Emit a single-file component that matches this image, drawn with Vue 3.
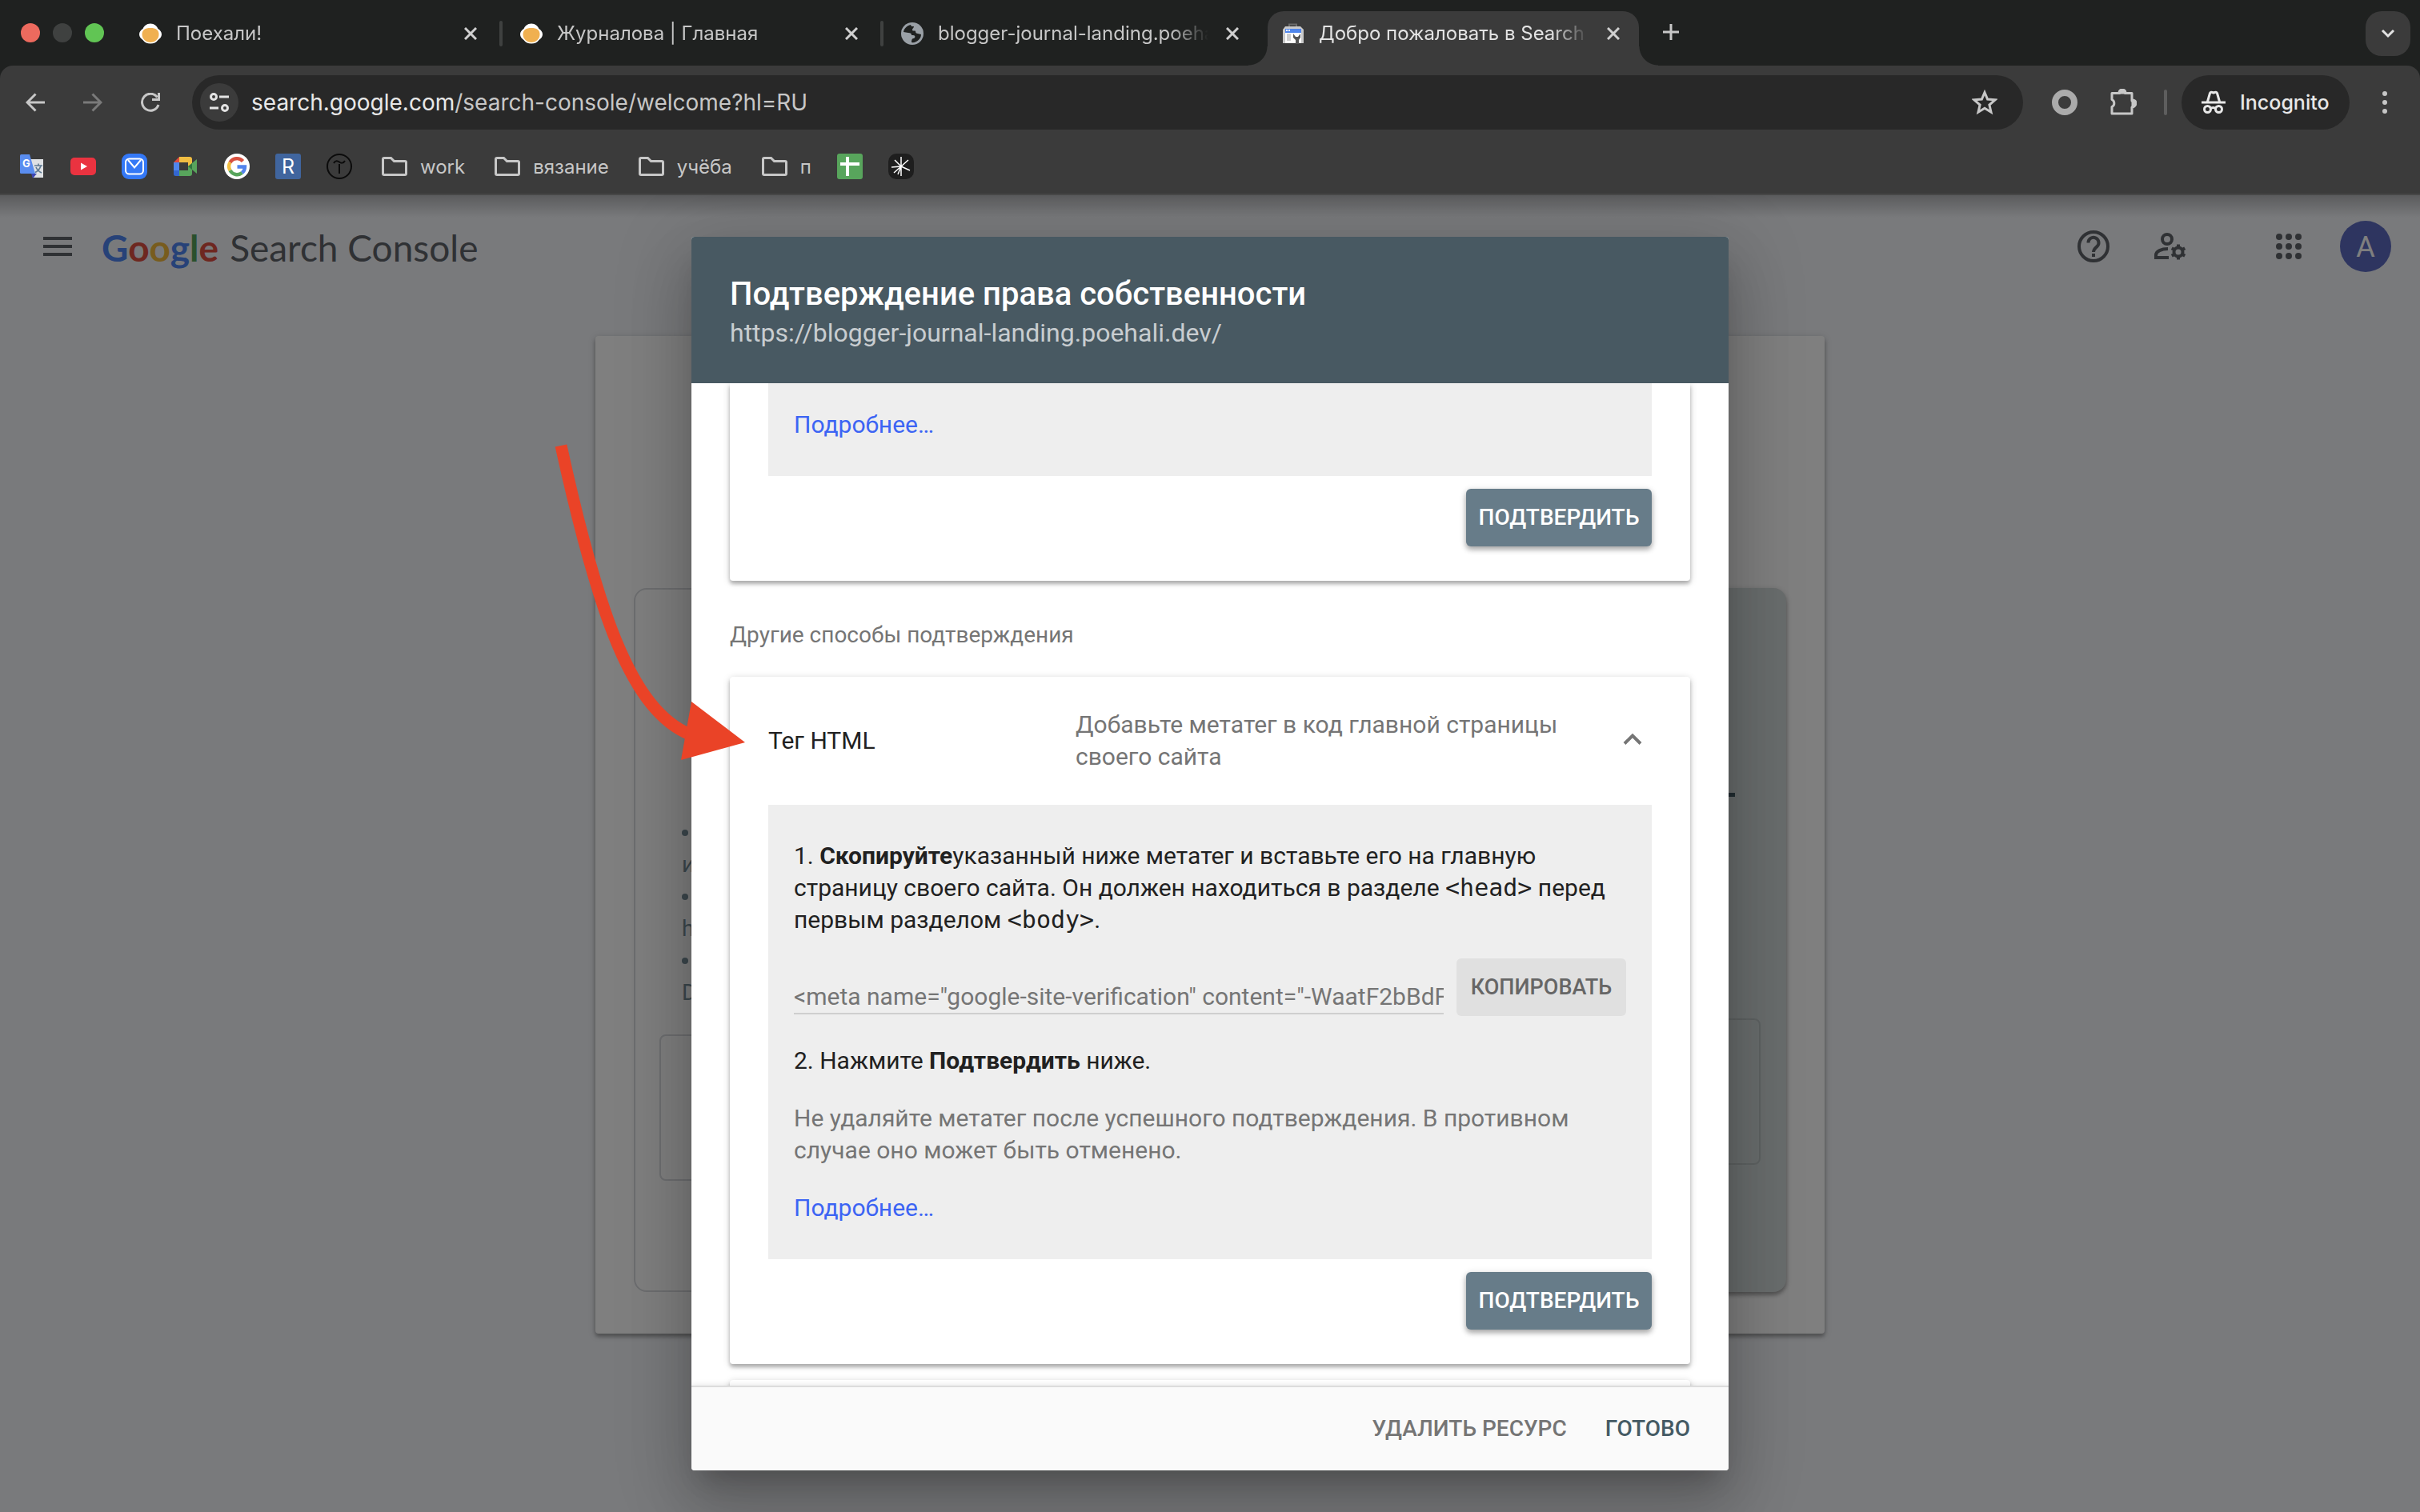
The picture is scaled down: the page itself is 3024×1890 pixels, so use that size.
<script setup>
import { ref } from 'vue'

const tabs = [
  { title: 'Поехали!', icon: 'egg', active: false },
  { title: 'Журналова | Главная', icon: 'egg', active: false },
  { title: 'blogger-journal-landing.poehali.dev', icon: 'globe', active: false },
  { title: 'Добро пожаловать в Search Console', icon: 'console', active: true },
]

const sites = ['translate', 'youtube', 'mail', 'meet', 'google', 'letter', 'tilda']
const folders = ['work', 'вязание', 'учёба', 'п']

const metaTag = ref('<meta name="google-site-verification" content="-WaatF2bBdFq" />')
const learnMore = 'Подробнее…'
</script>

<template>
  <div class="browser">
    <header class="chrome">
      <div class="tabstrip">
        <div class="lights">
          <span class="light light--close"></span>
          <span class="light light--min"></span>
          <span class="light light--max"></span>
        </div>
        <div class="tabs">
          <div v-for="tab in tabs" :key="tab.title" class="tab" :class="{ 'tab--active': tab.active }">
            <svg v-if="tab.icon === 'egg'" class="tab__icon" viewBox="0 0 28 28">
              <path d="M14 1.500c5 0 8 3 9.500 6.500C26 9.500 28 12 28 15s-2 5-4.500 7C21.500 25 18 26.500 14 26.500S6.500 25 4.500 22C2 20 0 18 0 15s2-5.500 4.500-7C6 4.500 9 1.500 14 1.500z" fill="#fff" />
              <path d="M14 7c7 0 10.500 2.500 10.500 8S20 25 14 25 3.500 20.500 3.500 15 7 7 14 7z" fill="#f0b050" />
            </svg>
            <svg v-else-if="tab.icon === 'globe'" class="tab__icon" viewBox="0 0 28 28">
              <circle cx="14" cy="14" r="14" fill="#9aa0a6" />
              <path d="M12 3c-5 1-8.500 5-9 9l6 1c3 0 4 1 4 3h2c3 0 3 3 1 4-2 0-3 1-3 5 6 1 12-4 12-10l-4-1c-2 0-3-1-3-3 0-1-3 0-4-1 0-3 2-3 2-5-2 0-4 0-4-2z" fill="#1f2120" />
              <path d="M3 13l6 1c3 0 4 1 4 3v3c-2 0-3 0-3 4C5.500 22.500 2.500 18 3 13z" fill="#9aa0a6" />
            </svg>
            <svg v-else class="tab__icon" viewBox="0 0 28 28">
              <path d="M9 6V2.500h9V6" fill="none" stroke="#6b6b6b" stroke-width="2" />
              <path d="M4 5h19l4 4v17H1V9z" fill="#c9c9c9" />
              <rect x="4" y="8" width="20" height="5" fill="#4f86ec" />
              <path d="M5 10h2M8 10h2" stroke="#fff" stroke-width="2" />
              <rect x="4" y="13" width="20" height="13" fill="#fff" />
              <rect x="6" y="14" width="5" height="9" fill="#cfcfcf" />
              <path d="M14 14v5l3 3v5h4v-5l2-3v-5l-3 4h-3z" fill="#555" />
            </svg>
            <span class="tab__title">{{ tab.title }}</span>
            <button class="tab__close" type="button" aria-label="Закрыть">
              <svg viewBox="0 0 16 16"><path d="M1 1l14 14M15 1L1 15" /></svg>
            </button>
          </div>
        </div>
        <button class="newtab" type="button" aria-label="Новая вкладка">
          <svg viewBox="0 0 20 20"><path d="M10 0v20M0 10h20" /></svg>
        </button>
        <button class="tabsearch" type="button" aria-label="Поиск вкладок">
          <svg viewBox="0 0 18 12"><path d="M2 2l7 7 7-7" /></svg>
        </button>
      </div>

      <div class="toolbar">
        <nav class="nav">
          <button class="nav__btn" type="button" aria-label="Назад">
            <svg viewBox="0 0 24 24"><path d="M24 12H2M12.500 1.500L2 12l10.500 10.500" /></svg>
          </button>
          <button class="nav__btn nav__btn--off" type="button" aria-label="Вперёд">
            <svg viewBox="0 0 24 24"><path d="M0 12h22M11.500 1.500L22 12 11.500 22.500" /></svg>
          </button>
          <button class="nav__btn" type="button" aria-label="Обновить">
            <svg viewBox="0 0 24 24"><path d="M22 15a10.500 10.500 0 1 1-1.500-9.500M22.500 0v8.500H14" /></svg>
          </button>
        </nav>
        <div class="omnibox">
          <span class="omnibox__site">
            <svg viewBox="0 0 24 24"><circle cx="5" cy="5" r="3.500" /><path d="M12 5h12M0 19h11" /><circle cx="19" cy="19" r="3.500" /></svg>
          </span>
          <span class="omnibox__url"><b>search.google.com</b>/search-console/welcome?hl=RU</span>
          <svg class="omnibox__star" viewBox="0 0 32 32"><path d="M16 3.500l3.600 8.500 9.400.8-7.100 6.200 2.100 9.200-8-4.900-8 4.900 2.100-9.200L3 12.800l9.400-.8z" /></svg>
        </div>
        <div class="actions">
          <svg class="ring" viewBox="0 0 32 32"><circle cx="16" cy="16" r="12" /></svg>
          <svg class="puzzle" viewBox="0 0 34 34"><path d="M3 5.500h9.500a3.500 3.500 0 0 1 7 0H28v9.500a4 4 0 0 1 0 8V31H3v-8.500a5 5 0 0 0 0-9z" /><path class="puzzle__nub" d="M12 5a4 4 0 0 1 8 0zM29 14a4 4 0 0 1 0 8z" /></svg>
          <span class="divider"></span>
          <span class="incognito">
            <svg viewBox="0 0 30 30">
              <path d="M0 15h30M7.500 14l3-10.500c.5-1.500 2-1.500 4.500-.5 2.500-1 4-1 4.500.5l3 10.500" />
              <circle cx="7.500" cy="23.500" r="4" /><circle cx="21.500" cy="23.500" r="4" /><path d="M11 23c2-2 5-2 7 0" />
            </svg>
            Incognito
          </span>
          <svg class="dots" viewBox="0 0 6 28"><circle cx="3" cy="3" r="3" /><circle cx="3" cy="14" r="3" /><circle cx="3" cy="25" r="3" /></svg>
        </div>
      </div>

      <div class="bookmarks">
        <template v-for="site in sites" :key="site">
          <svg v-if="site === 'translate'" class="mark" viewBox="0 0 32 32">
            <path d="M13 7h17v23H17z" fill="#dfe1e4" />
            <path d="M15 25h7l-5 6z" fill="#3b44b0" />
            <path d="M1 2.500Q1 1 2.500 1H13l7 24H2.500Q1 25 1 23.500z" fill="#5a8df0" />
            <text x="4" y="17" font-size="13" font-weight="700" fill="#fff">G</text>
            <path d="M19 15h10M24 12.500V15M27 15c-1 4-4 7-7 8.500M21 17c1 3 4 5.500 7 7" fill="none" stroke="#5f7a92" stroke-width="1.600" />
          </svg>
          <svg v-else-if="site === 'youtube'" class="mark" viewBox="0 0 32 32">
            <rect y="5" width="32" height="22" rx="5" fill="#ea3340" /><path d="M13 11.500l8 4.500-8 4.500z" fill="#fff" />
          </svg>
          <svg v-else-if="site === 'mail'" class="mark" viewBox="0 0 32 32">
            <rect width="32" height="32" rx="9" fill="#3478f6" /><rect x="5" y="6.500" width="22" height="19" rx="4.500" fill="none" stroke="#fff" stroke-width="2" /><path d="M8 8l8 9.500L24 8" fill="none" stroke="#fff" stroke-width="2" />
          </svg>
          <svg v-else-if="site === 'meet'" class="mark" viewBox="0 0 32 32">
            <path d="M1 11l7-7v7z" fill="#dd4b3e" /><path d="M8 4h13q3 0 3 3v7l-5 2v-5H8z" fill="#f1be42" />
            <path d="M1 11h7v10H1z" fill="#4f86ec" /><path d="M1 21h7v7H3.500Q1 28 1 25.500z" fill="#3367d0" /><path d="M8 21h11v-5l5-2v11q0 3-3 3H8z" fill="#58a55c" /><path d="M19 16l11-9v18z" fill="#58a55c" /><path d="M19 16l5-4v8z" fill="#31753f" />
          </svg>
          <svg v-else-if="site === 'google'" class="mark" viewBox="0 0 32 32">
            <circle cx="16" cy="16" r="16" fill="#fff" />
            <g fill="none" stroke-width="4.400"><path d="M23.500 9.500A10 10 0 0 0 7.500 11" stroke="#d85140" /><path d="M7.500 11a10 10 0 0 0 0 10" stroke="#f1be42" /><path d="M7.500 21a10 10 0 0 0 15 3" stroke="#58a55c" /><path d="M22.500 24a10 10 0 0 0 3.500-7.500h-9.500" stroke="#5383ec" /></g>
          </svg>
          <svg v-else-if="site === 'letter'" class="mark" viewBox="0 0 32 32">
            <rect width="32" height="32" rx="3" fill="#40659e" /><text x="16" y="25" text-anchor="middle" font-size="25" fill="#fff">R</text>
          </svg>
          <svg v-else class="mark" viewBox="0 0 32 32">
            <circle cx="16" cy="16" r="15" fill="none" stroke="#0b0b0b" stroke-width="2" /><path d="M9 12c2-4 5-3 7-1.500s5 2 7-1.500M16 13v12" fill="none" stroke="#0b0b0b" stroke-width="2" />
          </svg>
        </template>
        <span v-for="folder in folders" :key="folder" class="folder">
          <svg viewBox="0 0 32 24"><path d="M1.500 3q0-1.500 1.500-1.500h8.500l4 4H29q1.500 0 1.500 1.500v14q0 1.500-1.500 1.500H3q-1.500 0-1.500-1.500z" /></svg>
          {{ folder }}
        </span>
        <svg class="mark" viewBox="0 0 32 32"><rect width="32" height="32" rx="3" fill="#58a55c" /><path d="M13 4v24M4 13h24" stroke="#fff" stroke-width="4" /></svg>
        <svg class="mark" viewBox="0 0 32 32"><rect width="32" height="32" rx="10" fill="#1e1e1e" /><path d="M16 4v12L8 8M16 16l9-8M16 16l11 5M16 16l-12 1M16 16l-9 8M16 16l-4 10M16 16v12" fill="none" stroke="#fff" stroke-width="1.500" /></svg>
      </div>
    </header>

    <main class="viewport">
      <div class="appbar">
        <svg class="burger" viewBox="0 0 36 24"><path d="M0 2h36M0 12h36M0 22h36" /></svg>
        <div class="logo">
          <span class="logo__g"><i class="blue">G</i><i class="red">o</i><i class="yellow">o</i><i class="blue">g</i><i class="green">l</i><i class="red">e</i></span>
          <span>Search Console</span>
        </div>
        <div class="appbar__right">
          <svg class="help" viewBox="0 0 40 40"><circle cx="20" cy="20" r="18" /><path d="M13.500 15.500a6.500 6.500 0 1 1 11 4.500c-2.500 2.300-4.500 3.500-4.500 7" /><path d="M20 29v4" /></svg>
          <svg class="usergear" viewBox="0 0 40 34">
            <circle cx="16" cy="8" r="6" /><path d="M18 31H2v-3c0-5 7-8 15-8" />
            <circle cx="30" cy="24" r="5.500" /><path d="M30 14.500v4M30 29.500v4M21.800 19.300l3.400 2M34.800 26.700l3.400 2M21.800 28.700l3.400-2M34.800 21.300l3.400-2" />
          </svg>
          <svg class="apps" viewBox="0 0 32 32">
            <template v-for="row in 3" :key="row"><circle v-for="col in 3" :key="col" :cx="col * 12 - 8" :cy="row * 12 - 8" r="4" /></template>
          </svg>
          <span class="avatar">A</span>
        </div>
      </div>

      <section class="welcome">
        <div class="choice choice--domain">
          <ul class="choice__list"><li>и</li><li>h</li><li>D</li></ul>
          <div class="choice__field"></div>
        </div>
        <div class="choice choice--prefix">
          <div class="choice__rule"></div>
          <div class="choice__field"></div>
        </div>
      </section>

      <div class="scrim">
        <div class="stage">
          <div class="dialog" role="dialog" aria-labelledby="dialog-title">
            <header class="dialog__head">
              <h1 id="dialog-title">Подтверждение права собственности</h1>
              <p>https://blogger-journal-landing.poehali.dev/</p>
            </header>

            <div class="dialog__body">
              <section class="card card--scrolled">
                <div class="panel panel--scrolled"><a href="#">{{ learnMore }}</a></div>
                <div class="card__actions"><button class="btn btn--primary" type="button">ПОДТВЕРДИТЬ</button></div>
              </section>

              <h2 class="subtitle">Другие способы подтверждения</h2>

              <section class="card">
                <div class="card__head">
                  <h3>Тег HTML</h3>
                  <p>Добавьте метатег в код главной страницы своего сайта</p>
                  <svg class="chevron" viewBox="0 0 24 20"><path d="M2 13.500L12 3.500l10 10" /></svg>
                </div>
                <div class="panel">
                  <p>1. <strong>Скопируйте</strong>указанный ниже метатег и вставьте его на главную страницу своего сайта. Он должен находиться в разделе <code>&lt;head&gt;</code> перед первым разделом <code>&lt;body&gt;</code>.</p>
                  <div class="copy">
                    <input v-model="metaTag" class="copy__input" type="text" readonly aria-label="Метатег" />
                    <button class="btn btn--copy" type="button">КОПИРОВАТЬ</button>
                  </div>
                  <p>2. Нажмите <strong>Подтвердить</strong> ниже.</p>
                  <p class="note">Не удаляйте метатег после успешного подтверждения. В противном случае оно может быть отменено.</p>
                  <a href="#">{{ learnMore }}</a>
                </div>
                <div class="card__actions"><button class="btn btn--primary" type="button">ПОДТВЕРДИТЬ</button></div>
              </section>

              <section class="card card--next"></section>
            </div>

            <footer class="dialog__foot">
              <button class="link" type="button">УДАЛИТЬ РЕСУРС</button>
              <button class="link link--done" type="button">ГОТОВО</button>
            </footer>
          </div>

          <svg class="arrow" viewBox="0 0 250 410">
            <path d="M11 12C58 226 100 343 172 373" fill="none" stroke="#ea4327" stroke-width="15" />
            <path d="M174 332l67 51-80 22z" fill="#ea4327" />
          </svg>
        </div>
      </div>
    </main>
  </div>
</template>

<style>
html,
body {
  height: 100%;
}
body {
  margin: 0;
}
#app {
  height: 100%;
}
</style>

<style scoped>
.browser {
  display: flex;
  flex-direction: column;
  height: 100%;
  overflow: hidden;
  background: #1f2120;
  font-family: Roboto, "Noto Sans", sans-serif;
}
.browser *,
.browser *::before {
  box-sizing: border-box;
}
button {
  margin: 0;
  padding: 0;
  border: 0;
  background: none;
  font-family: inherit;
}
svg {
  display: block;
  flex: none;
}
h1,
h2,
h3,
p,
ul {
  margin: 0;
  padding: 0;
  font-weight: 400;
}

/* Browser chrome */
.chrome {
  flex: none;
  font-family: Inter, "Noto Sans", sans-serif;
  color: #c7c7c7;
}
.tabstrip {
  display: flex;
  align-items: flex-start;
  height: 82px;
  padding: 14px 12px 0 26px;
}
.lights {
  display: flex;
  gap: 16px;
  width: 130px;
  padding-top: 15px;
}
.light {
  width: 24px;
  height: 24px;
  border-radius: 50%;
}
.light--close {
  background: #ed6a5e;
}
.light--min {
  background: #3f4140;
}
.light--max {
  background: #61c554;
}
.tabs {
  display: flex;
  gap: 12px;
}
.tab {
  position: relative;
  display: flex;
  align-items: center;
  width: 464px;
  height: 68px;
  padding: 0 24px 13px 18px;
  font-size: 24px;
}
.tab:nth-child(-n + 2)::after {
  content: "";
  position: absolute;
  right: -8px;
  top: 12px;
  width: 4px;
  height: 32px;
  border-radius: 2px;
  background: #3f4140;
}
.tab--active {
  background: #3b3b3b;
  border-radius: 20px 20px 0 0;
  color: #e3e3e3;
}
.tab--active::before,
.tab--active::after {
  content: "";
  position: absolute;
  bottom: 0;
  width: 24px;
  height: 24px;
}
.tab--active::before {
  left: -24px;
  background: radial-gradient(circle at 0 0, transparent 23px, #3b3b3b 24px);
}
.tab--active::after {
  right: -24px;
  background: radial-gradient(circle at 100% 0, transparent 23px, #3b3b3b 24px);
}
.tab__icon {
  width: 28px;
  height: 28px;
  margin-right: 18px;
}
.tab__title {
  flex: 1;
  overflow: hidden;
  white-space: nowrap;
  line-height: 32px;
  mask-image: linear-gradient(90deg, #000 290px, transparent 338px);
}
.tab__close {
  margin-left: 20px;
}
.tab__close svg {
  width: 16px;
  height: 16px;
  fill: none;
  stroke: #d0d0d0;
  stroke-width: 3;
}
.newtab {
  margin: 16px auto 0 30px;
}
.newtab svg {
  width: 20px;
  height: 20px;
  stroke: #c7c7c7;
  stroke-width: 3;
}
.tabsearch {
  display: flex;
  align-items: center;
  justify-content: center;
  width: 56px;
  height: 56px;
  border-radius: 20px;
  background: #3b3b3b;
}
.tabsearch svg {
  width: 18px;
  height: 12px;
  fill: none;
  stroke: #e3e3e3;
  stroke-width: 3;
}
.toolbar {
  display: flex;
  align-items: center;
  height: 92px;
  padding: 0 41px 0 32px;
  background: #3b3b3b;
  border-radius: 16px 16px 0 0;
}
.nav {
  display: flex;
  gap: 48px;
  width: 208px;
}
.nav__btn svg {
  width: 24px;
  height: 24px;
  fill: none;
  stroke: #c7c7c7;
  stroke-width: 3;
}
.nav__btn--off svg {
  stroke: #7a7a7a;
}
.omnibox {
  display: flex;
  align-items: center;
  flex: 1;
  height: 68px;
  padding: 0 32px 0 10px;
  border-radius: 34px;
  background: #282828;
  font-size: 28px;
}
.omnibox__site {
  display: flex;
  align-items: center;
  justify-content: center;
  width: 48px;
  height: 48px;
  margin-right: 16px;
  border-radius: 50%;
  background: #3b3b3b;
}
.omnibox__site svg {
  width: 24px;
  height: 24px;
  fill: none;
  stroke: #e3e3e3;
  stroke-width: 3;
}
.omnibox__url {
  flex: 1;
}
.omnibox__url b {
  font-weight: 400;
  color: #e8e8e8;
}
.omnibox__star {
  width: 32px;
  height: 32px;
  fill: none;
  stroke: #c7c7c7;
  stroke-width: 3;
}
.actions {
  display: flex;
  align-items: center;
  padding-left: 36px;
}
.ring {
  width: 32px;
  height: 32px;
  fill: none;
  stroke: #ababab;
  stroke-width: 8;
}
.puzzle {
  width: 34px;
  height: 34px;
  margin: 0 34px 0 40px;
  fill: none;
  stroke: #c7c7c7;
  stroke-width: 3;
  stroke-linejoin: round;
}
.puzzle__nub {
  fill: #c7c7c7;
}
.divider {
  width: 4px;
  height: 32px;
  border-radius: 2px;
  background: #5e5e5e;
}
.incognito {
  display: flex;
  align-items: center;
  gap: 18px;
  width: 210px;
  height: 68px;
  margin: 0 41px 0 18px;
  padding-left: 25px;
  border-radius: 34px;
  background: #282828;
  color: #e8e8e8;
  font-size: 25px;
  font-weight: 500;
}
.incognito svg {
  width: 30px;
  height: 30px;
  fill: none;
  stroke: #e8e8e8;
  stroke-width: 3;
}
.dots {
  width: 6px;
  height: 28px;
  fill: #c7c7c7;
}
.bookmarks {
  display: flex;
  align-items: center;
  gap: 32px;
  height: 70px;
  padding: 0 24px;
  background: #3b3b3b;
  border-bottom: 2px solid #474747;
  font-size: 24px;
}
.mark {
  width: 32px;
  height: 32px;
}
.folder {
  display: flex;
  align-items: center;
  gap: 16px;
  margin-left: 5px;
}
.folder svg {
  width: 32px;
  height: 24px;
  fill: none;
  stroke: #c7c7c7;
  stroke-width: 3;
}

/* Page under the dialog */
.viewport {
  position: relative;
  flex: 1;
  min-height: 0;
  overflow: hidden;
  background: #f2f4f8;
}
.appbar {
  display: flex;
  align-items: center;
  height: 128px;
  padding: 0 36px 0 54px;
  color: #5f6368;
}
.burger {
  width: 36px;
  height: 24px;
  margin-right: 37px;
  stroke: #5f6368;
  stroke-width: 4;
}
.logo {
  display: flex;
  gap: 14px;
  padding-top: 4px;
  font-family: Lato, Inter, sans-serif;
  font-size: 46px;
  line-height: 60px;
}
.logo i {
  font-style: normal;
}
.logo__g {
  font-weight: 700;
}
.blue {
  color: #4f84f0;
}
.red {
  color: #dc4e41;
}
.yellow {
  color: #f0b93c;
}
.green {
  color: #55a05a;
}
.appbar__right {
  display: flex;
  align-items: center;
  margin-left: auto;
  fill: none;
  stroke: #5f6368;
  stroke-width: 4;
}
.help {
  width: 40px;
  height: 40px;
  margin-right: 56px;
}
.usergear {
  width: 40px;
  height: 34px;
  margin-right: 112px;
}
.apps {
  width: 32px;
  height: 32px;
  margin-right: 48px;
  fill: #5f6368;
  stroke: none;
}
.avatar {
  width: 64px;
  height: 64px;
  border-radius: 50%;
  background: #5c6bc0;
  color: #fff;
  font-size: 36px;
  line-height: 66px;
  text-align: center;
}
.welcome {
  display: flex;
  gap: 48px;
  width: 1536px;
  max-width: 100%;
  height: 1247px;
  margin: 48px auto 0;
  padding: 315px 48px 52px;
  border-radius: 4px;
  background: #fff;
  box-shadow: 0 4px 4px rgba(0, 0, 0, 0.24), 0 2px 10px rgba(0, 0, 0, 0.2);
}
.choice {
  flex: 1;
  padding: 0 32px;
  border-radius: 16px;
}
.choice__field {
  border: 2px solid #dadce0;
  border-radius: 8px;
  height: 183px;
}
.choice--domain {
  padding: 284px 30px 0;
  border: 2px solid #dadce0;
}
.choice--domain .choice__field {
  margin-top: 32px;
}
.choice__list {
  padding-left: 28px;
  list-style: none;
  font-size: 28px;
  line-height: 40px;
  color: #78909c;
}
.choice__list li::before {
  content: "";
  display: block;
  width: 8px;
  height: 8px;
  margin: 16px 0;
  border-radius: 50%;
  background: #78909c;
}
.choice--prefix {
  padding-top: 256px;
  background: #d3dada;
  box-shadow: 0 4px 4px rgba(0, 0, 0, 0.24), 0 2px 8px rgba(0, 0, 0, 0.2);
}
.choice__rule {
  height: 5px;
  margin: 0 32px 277px;
  background: #455a64;
}
.choice--prefix .choice__field {
  border-color: #bcc4c5;
}

/* Dialog */
.scrim {
  position: absolute;
  inset: 0;
  padding: 52px 0;
  background: linear-gradient(rgba(0, 0, 0, 0.25), transparent 28px), rgba(0, 0, 0, 0.5);
}
.stage {
  position: relative;
  width: 1296px;
  max-width: 100%;
  height: 100%;
  margin: 0 auto;
}
.dialog {
  display: flex;
  flex-direction: column;
  height: 100%;
  overflow: hidden;
  border-radius: 4px;
  background: #fff;
  box-shadow: 0 22px 30px -14px rgba(0, 0, 0, 0.2), 0 48px 76px 6px rgba(0, 0, 0, 0.14), 0 18px 92px 16px rgba(0, 0, 0, 0.12);
}
.dialog__head {
  position: relative;
  flex: none;
  padding: 48px 48px 39px;
  background: #485962;
  color: #fff;
}
.dialog__head h1 {
  font-size: 40px;
  font-weight: 500;
  line-height: 48px;
}
.dialog__head p {
  font-size: 32px;
  line-height: 48px;
  color: #c8cdd0;
}
.dialog__body {
  flex: 1;
  min-height: 0;
  overflow: hidden;
  padding: 0 48px;
  font-size: 30px;
  line-height: 40px;
  color: #212121;
}
.card {
  padding: 0 48px 43px;
  border-radius: 4px;
  background: #fff;
  box-shadow: 0 4px 4px rgba(0, 0, 0, 0.22), 0 2px 10px rgba(0, 0, 0, 0.2);
}
.card--scrolled {
  border-radius: 0 0 4px 4px;
}
.card--next {
  height: 160px;
  margin-top: 20px;
}
.card__head {
  display: flex;
  align-items: center;
  height: 160px;
}
.card__head h3 {
  width: 384px;
  font-size: 30px;
}
.card__head p {
  width: 640px;
  color: #757575;
}
.chevron {
  width: 24px;
  height: 20px;
  margin: 0 12px 0 auto;
  fill: none;
  stroke: #757575;
  stroke-width: 4;
}
.panel {
  padding: 44px 32px;
  background: #eee;
}
.panel--scrolled {
  padding-top: 32px;
}
.panel a {
  display: block;
  width: max-content;
  color: #3c64f4;
  text-decoration: none;
}
.panel strong {
  font-weight: 700;
}
.panel code {
  font-family: "DejaVu Sans Mono", monospace;
  font-size: 30px;
  line-height: 1;
}
.panel .note {
  margin: 32px 0;
  color: #757575;
}
.copy {
  display: flex;
  align-items: flex-end;
  gap: 16px;
  margin: 28px 0 36px;
}
.copy__input {
  flex: 1;
  min-width: 0;
  height: 44px;
  margin: 0 0 2px;
  padding: 0;
  border: 0;
  border-bottom: 2px solid #cfcfcf;
  border-radius: 0;
  outline: 0;
  background: none;
  font-family: inherit;
  font-size: 30px;
  color: #757575;
}
.card__actions {
  display: flex;
  justify-content: flex-end;
  padding-top: 16px;
}
.btn {
  height: 72px;
  padding-bottom: 2px;
  border-radius: 6px;
  font-size: 28px;
  font-weight: 500;
}
.btn--primary {
  width: 232px;
  background: #677c89;
  color: #fff;
  box-shadow: 0 4px 6px rgba(0, 0, 0, 0.26), 0 2px 10px rgba(0, 0, 0, 0.16);
}
.btn--copy {
  width: 212px;
  padding-bottom: 0;
  background: #e0e0e0;
  color: #666;
  font-size: 27px;
}
.subtitle {
  margin: 48px 0 32px;
  font-size: 28px;
  line-height: 40px;
  color: #757575;
}
.dialog__foot {
  position: relative;
  display: flex;
  align-items: center;
  justify-content: flex-end;
  gap: 48px;
  flex: none;
  height: 106px;
  padding: 0 48px;
  border-top: 2px solid #dcdcdc;
  background: #fafafa;
  box-shadow: 0 0 8px rgba(0, 0, 0, 0.12);
}
.link {
  font-size: 28px;
  font-weight: 500;
  line-height: 40px;
  color: #757575;
}
.link--done {
  color: #455a64;
}
.arrow {
  position: absolute;
  left: -174px;
  top: 249px;
  width: 250px;
  height: 410px;
  pointer-events: none;
}
</style>
